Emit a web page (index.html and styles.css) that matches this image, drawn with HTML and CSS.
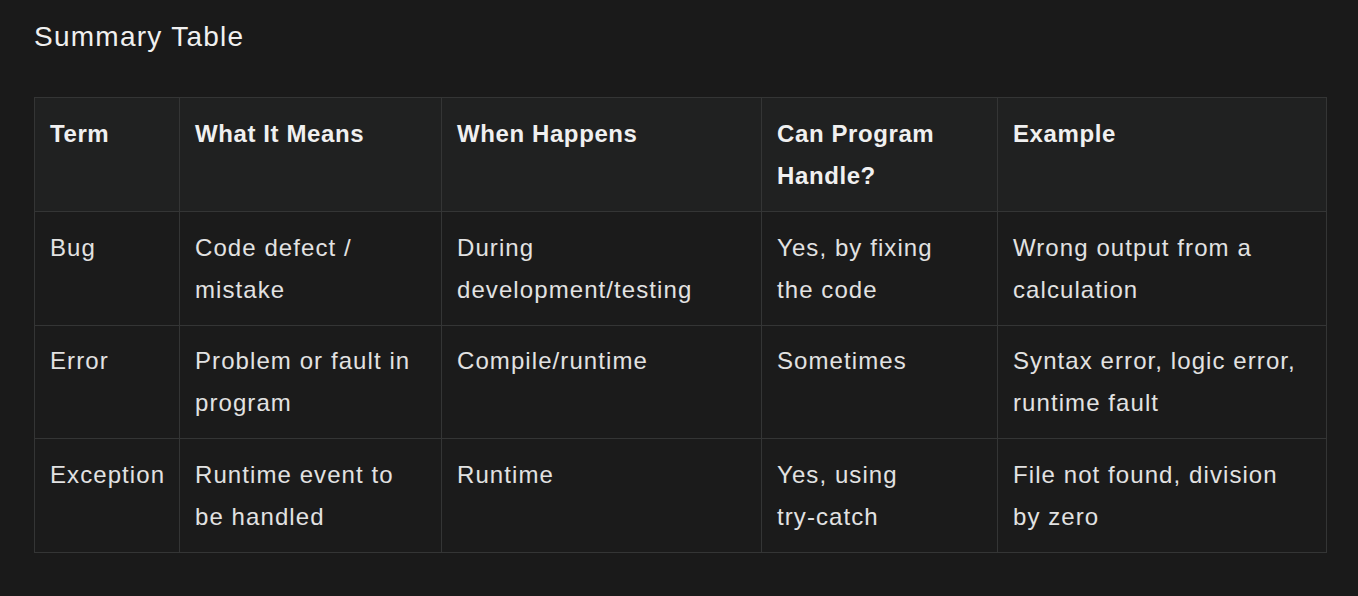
FILE: index.html
```html
<!DOCTYPE html>
<html lang="en">
<head>
<meta charset="utf-8">
<title>Summary Table</title>
<link rel="stylesheet" href="styles.css">
</head>
<body>
<main class="page">
  <h2 class="title">Summary Table</h2>
  <table class="summary">
    <colgroup>
      <col class="c1"><col class="c2"><col class="c3"><col class="c4"><col class="c5">
    </colgroup>
    <thead>
      <tr>
        <th>Term</th>
        <th>What It Means</th>
        <th>When Happens</th>
        <th>Can Program Handle?</th>
        <th>Example</th>
      </tr>
    </thead>
    <tbody>
      <tr>
        <td>Bug</td>
        <td>Code defect / mistake</td>
        <td>During development/testing</td>
        <td>Yes, by fixing the code</td>
        <td>Wrong output from a calculation</td>
      </tr>
      <tr>
        <td>Error</td>
        <td>Problem or fault in program</td>
        <td>Compile/runtime</td>
        <td>Sometimes</td>
        <td>Syntax error, logic error, runtime fault</td>
      </tr>
      <tr>
        <td>Exception</td>
        <td>Runtime event to be handled</td>
        <td>Runtime</td>
        <td>Yes, using <span class="nowrap">try-catch</span></td>
        <td>File not found, division by zero</td>
      </tr>
    </tbody>
  </table>
</main>
</body>
</html>
```

FILE: styles.css
```css
html, body {
  margin: 0;
  padding: 0;
  background: #1a1a1a;
}
body {
  font-family: "Liberation Sans", Arial, sans-serif;
  color: #e6e6e6;
}
.page {
  padding: 19px 32px 0 34px;
}
.title {
  margin: 0;
  font-size: 28px;
  line-height: 36px;
  font-weight: 400;
  letter-spacing: 0.045em;
  color: #f0f0f0;
}
.summary {
  margin-top: 42px;
  width: 1292px;
  border-collapse: collapse;
  table-layout: fixed;
  font-size: 24px;
  line-height: 42px;
  letter-spacing: 0.045em;
}
.c1 { width: 145px; }
.c2 { width: 262px; }
.c3 { width: 320px; }
.c4 { width: 236px; }
.c5 { width: 329px; }
.summary th,
.summary td {
  border: 1px solid #343535;
  padding: 14.5px 30px 14px 15px;
  text-align: left;
  vertical-align: top;
}
.summary th:first-child,
.summary td:first-child {
  padding-right: 0;
}
.summary thead th {
  padding-top: 15px;
}
.summary th {
  background: #202121;
  font-weight: 700;
  color: #f0f0f0;
  letter-spacing: 0.025em;
}
.summary td {
  background: #1b1b1b;
  color: #e2e2e2;
}
.nowrap {
  white-space: nowrap;
}
```
